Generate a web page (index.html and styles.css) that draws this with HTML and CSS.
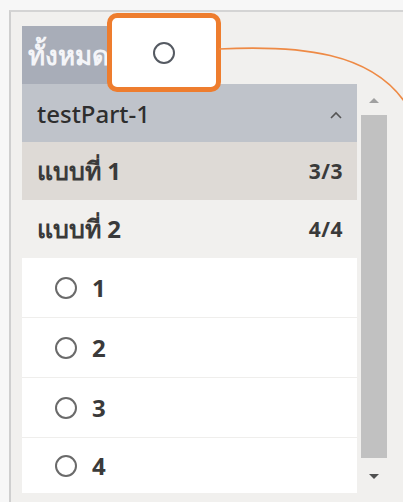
FILE: index.html
```html
<!DOCTYPE html>
<html lang="th">
<head>
<meta charset="utf-8">
<link rel="stylesheet" href="styles.css">
</head>
<body>
<div class="frame">
  <div class="panel">
    <div class="tabs">
      <div class="tab">ทั้งหมด</div>
    </div>
    <div class="body">
      <div class="list">
        <div class="part">
          <span>testPart-1</span>
          <svg class="chev" width="14" height="10" viewBox="0 0 14 10"><path d="M2 8 L7 3 L12 8" fill="none" stroke="#555" stroke-width="1.6"/></svg>
        </div>
        <div class="section active"><span><span class="th">แบบที่</span> 1</span><span class="count">3/3</span></div>
        <div class="section"><span><span class="th">แบบที่</span> 2</span><span class="count">4/4</span></div>
        <div class="item"><span class="dot"></span><span>1</span></div>
        <div class="item"><span class="dot"></span><span>2</span></div>
        <div class="item"><span class="dot"></span><span>3</span></div>
        <div class="item"><span class="dot"></span><span>4</span></div>
      </div>
      <div class="scrollbar">
        <span class="arrow up"></span>
        <span class="thumb"></span>
        <span class="arrow down"></span>
      </div>
    </div>
  </div>
  <div class="callout"><span class="ring"></span></div>
  <svg class="leader" width="403" height="502" viewBox="0 0 403 502">
    <path d="M219 49 C 300 45, 372 52, 406 104" fill="none" stroke="#ee8a45" stroke-width="1.6"/>
  </svg>
</div>
</body>
</html>
```

FILE: styles.css
```css
html, body {
  margin: 0;
  padding: 0;
  background: #f7f7f7;
  width: 403px;
  height: 502px;
  overflow: hidden;
}

.frame {
  position: relative;
  margin: 10px 0 0 9px;
  height: 492px;
  border-left: 2px solid #cfcfcf;
  border-top: 2px solid #d4d4d4;
  background: #f1f0ee;
  padding: 14px 0 0 11px;
  box-sizing: border-box;
  font-family: "Noto Sans", "Liberation Sans", sans-serif;
  color: #333;
}

.panel {
  display: flex;
  flex-direction: column;
}

.tabs {
  height: 58px;
  display: flex;
}

.tab {
  width: 100px;
  background: #a8adb8;
  color: #f4f5f8;
  font-size: 26px;
  font-weight: 600;
  display: flex;
  align-items: center;
  padding-left: 6px;
  box-sizing: border-box;
  white-space: nowrap;
  overflow: hidden;
}

.body {
  display: flex;
}

.list {
  width: 335px;
  display: flex;
  flex-direction: column;
}

.part {
  height: 58px;
  background: #bfc3ca;
  display: flex;
  align-items: center;
  justify-content: space-between;
  padding: 0 14px 0 15px;
  font-size: 24px;
  font-weight: 500;
  color: #2e2e2e;
}

.chev {
  margin-top: 4px;
}

.section {
  height: 58px;
  display: flex;
  align-items: center;
  justify-content: space-between;
  padding: 0 14px 0 15px;
  font-size: 24px;
  font-weight: 700;
  color: #3a3a3a;
}

.section .th {
  font-size: 25px;
}

.section.active {
  background: #dedad6;
}

.count {
  font-size: 21px;
  letter-spacing: 0.5px;
}

.item {
  height: 59px;
  background: #fff;
  border-bottom: 1px solid #efeeec;
  display: flex;
  align-items: center;
  gap: 15px;
  padding-left: 33px;
  font-size: 24px;
  font-weight: 700;
  color: #3a3a3a;
}

.item:last-child {
  border-bottom: none;
  height: 55px;
}

.dot {
  width: 18px;
  height: 18px;
  border: 2px solid #6a6a6a;
  border-radius: 50%;
}

.scrollbar {
  width: 30px;
  display: flex;
  flex-direction: column;
  align-items: center;
  padding-top: 14px;
  padding-left: 4px;
  box-sizing: border-box;
}

.arrow {
  width: 0;
  height: 0;
  border-left: 5px solid transparent;
  border-right: 5px solid transparent;
}

.arrow.up {
  border-bottom: 5px solid #a0a0a0;
}

.arrow.down {
  border-top: 5px solid #505050;
  margin-top: 16px;
}

.thumb {
  margin-top: 12px;
  width: 26px;
  height: 343px;
  background: #c1c1c1;
}

.callout {
  position: absolute;
  left: 96px;
  top: 1px;
  width: 114px;
  height: 79px;
  box-sizing: border-box;
  border: 5px solid #ee7d2e;
  border-radius: 10px;
  background: #fff;
  display: flex;
  align-items: center;
  justify-content: center;
}

.ring {
  width: 18px;
  height: 18px;
  border: 2px solid #555a62;
  border-radius: 50%;
}

.leader {
  position: absolute;
  left: -11px;
  top: -12px;
  pointer-events: none;
}
```
